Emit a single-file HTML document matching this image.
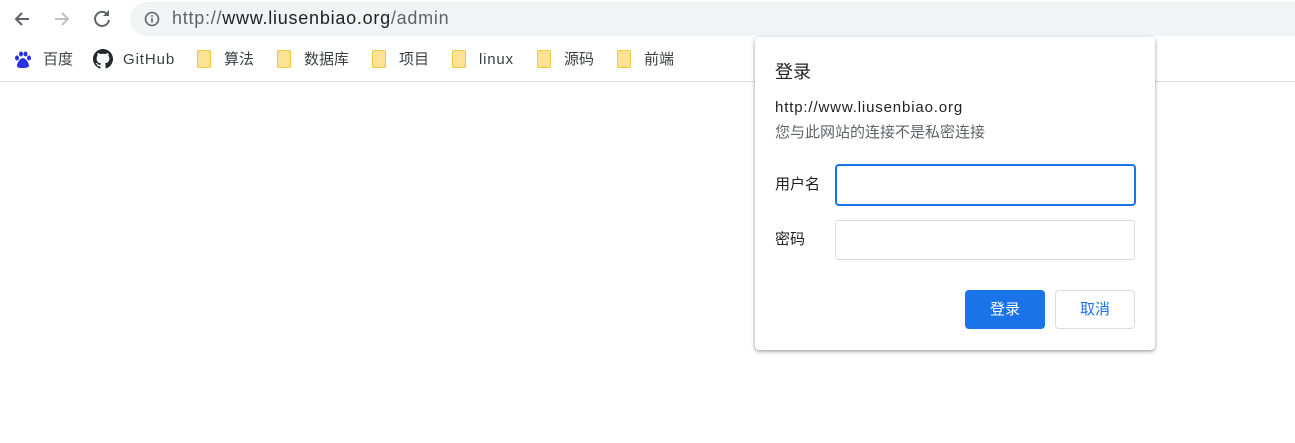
<!DOCTYPE html>
<html><head><meta charset="utf-8"><style>
body{margin:0;width:1295px;height:443px;background:#fff;font-family:"Liberation Sans","Noto Sans CJK SC",sans-serif;position:relative;overflow:hidden}
.a{position:absolute}
.omni{left:130px;top:2px;width:1190px;height:34px;border-radius:17px;background:#f1f3f4}
.url{left:172px;top:8px;font-size:18px;letter-spacing:0.75px;color:#5f6368;line-height:20px}
.url b{font-weight:normal;color:#202124}
.bm{top:51px;font-size:15px;color:#3c4043;line-height:18px}
.fold{top:50px;width:14px;height:18px;background:#fde293;border:1px solid #f4c542;border-radius:2px;box-sizing:border-box}
.line{left:0;top:81px;width:1295px;height:1px;background:#dadce0}
.dlg{left:755px;top:37px;width:400px;height:313px;background:#fff;border-radius:4px;box-shadow:0 1px 3px rgba(0,0,0,.3),0 2px 6px rgba(0,0,0,.15)}
.inp{box-sizing:border-box;border:1px solid #dadce0;border-radius:3px;background:#fff}
.btn{box-sizing:border-box;border-radius:4px;font-size:14px;text-align:center;line-height:39px}
</style></head><body>
<svg class="a" style="left:12px;top:9px" width="20" height="20" viewBox="0 0 20 20"><path d="M17 10H4M10 4l-6 6 6 6" stroke="#5f6368" stroke-width="2" fill="none"/></svg>
<svg class="a" style="left:52px;top:9px" width="20" height="20" viewBox="0 0 20 20"><path d="M3 10h13M10 4l6 6-6 6" stroke="#bdc1c6" stroke-width="2" fill="none"/></svg>
<svg class="a" style="left:92px;top:8px" width="20" height="20" viewBox="0 0 20 20"><path d="M15.5 6.5A7 7 0 1 0 17 12" stroke="#5f6368" stroke-width="2" fill="none"/><path d="M17 2v6h-6z" fill="#5f6368"/></svg>
<div class="a omni"></div>
<svg class="a" style="left:144px;top:11px" width="16" height="16" viewBox="0 0 16 16"><circle cx="8" cy="8" r="6.5" stroke="#5f6368" stroke-width="1.6" fill="none"/><rect x="7.2" y="7" width="1.6" height="4.5" fill="#5f6368"/><rect x="7.2" y="4.2" width="1.6" height="1.6" fill="#5f6368"/></svg>
<div class="a url">http://<b>www.liusenbiao.org</b>/admin</div>
<svg class="a" style="left:14px;top:51px" width="18" height="18" viewBox="0 0 18 18" fill="#2932e1"><ellipse cx="3" cy="7" rx="2" ry="2.5"/><ellipse cx="7" cy="3" rx="2" ry="2.5"/><ellipse cx="11.5" cy="3" rx="2" ry="2.5"/><ellipse cx="15" cy="7" rx="2" ry="2.5"/><path d="M9 7c-3 0-6 5-6 7.5S6 17 9 17s6-.5 6-2.5S12 7 9 7z"/></svg>
<div class="a bm" style="left:43px">百度</div>
<svg class="a" style="left:93px;top:49px" width="20" height="20" viewBox="0 0 16 16"><path fill="#24292e" d="M8 0C3.6 0 0 3.6 0 8c0 3.5 2.3 6.5 5.5 7.600.4.1.5-.2.5-.4v-1.4c-2.2.5-2.7-1-2.7-1-.4-.9-.9-1.2-.9-1.2-.7-.5.1-.5.1-.5.8.1 1.200.8 1.2.8.7 1.2 1.9.9 2.3.7.1-.5.3-.9.5-1.1-1.8-.2-3.6-.9-3.6-4 0-.9.3-1.6.8-2.1-.1-.2-.4-1 .1-2.1 0 0 .7-.2 2.2.8.6-.2 1.3-.3 2-.3s1.4.1 2 .3c1.5-1 2.2-.8 2.2-.8.4 1.1.2 1.9.1 2.1.5.6.8 1.3.8 2.1 0 3.1-1.9 3.7-3.6 3.900.3.3.5.8.5 1.5v2.2c0 .2.1.5.6.4C13.7 14.5 16 11.5 16 8c0-4.4-3.6-8-8-8z"/></svg>
<div class="a bm" style="left:123px;letter-spacing:0.9px">GitHub</div>
<div class="a fold" style="left:197px"></div><div class="a bm" style="left:224px">算法</div>
<div class="a fold" style="left:277px"></div><div class="a bm" style="left:304px">数据库</div>
<div class="a fold" style="left:372px"></div><div class="a bm" style="left:399px">项目</div>
<div class="a fold" style="left:452px"></div><div class="a bm" style="left:479px;letter-spacing:0.8px">linux</div>
<div class="a fold" style="left:537px"></div><div class="a bm" style="left:564px">源码</div>
<div class="a fold" style="left:617px"></div><div class="a bm" style="left:644px">前端</div>
<div class="a line"></div>
<div class="a dlg"></div>
<div class="a" style="left:775px;top:61px;font-size:18px;color:#202124;line-height:22px">登录</div>
<div class="a" style="left:775px;top:99px;font-size:15px;letter-spacing:0.85px;color:#202124;line-height:18px">http://www.liusenbiao.org</div>
<div class="a" style="left:775px;top:125px;font-size:15px;color:#5f6368;line-height:16px">您与此网站的连接不是私密连接</div>
<div class="a" style="left:775px;top:177px;font-size:15px;color:#202124;line-height:16px">用户名</div>
<div class="a inp" style="left:835px;top:164px;width:301px;height:42px;border:2px solid #1a73e8;border-radius:4px"></div>
<div class="a" style="left:775px;top:232px;font-size:15px;color:#202124;line-height:16px">密码</div>
<div class="a inp" style="left:835px;top:220px;width:300px;height:40px"></div>
<div class="a btn" style="left:965px;top:290px;width:80px;height:39px;background:#1a73e8;color:#fff;font-size:15px">登录</div>
<div class="a btn" style="left:1055px;top:290px;width:80px;height:39px;border:1px solid #dadce0;color:#1a73e8;line-height:37px;font-size:15px">取消</div>
</body></html>
